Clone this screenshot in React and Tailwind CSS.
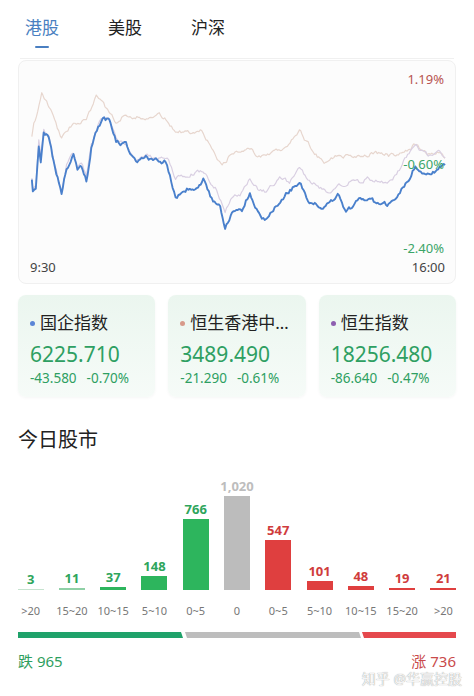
import React from "react";

const FONT = { fontFamily: '"Noto Sans", "Noto Sans CJK SC", sans-serif' };

function rng(seed) {
  let s = seed >>> 0;
  return () => {
    s = (s + 0x6d2b79f5) >>> 0;
    let t = s;
    t = Math.imul(t ^ (t >>> 15), t | 1);
    t ^= t + Math.imul(t ^ (t >>> 7), t | 61);
    return ((t ^ (t >>> 14)) >>> 0) / 4294967296;
  };
}

// key points in page coords, jitter added on top
function makeLine(keys, seed, amp) {
  const r = rng(seed);
  const pts = [];
  let n = 0;
  for (let i = 0; i < keys.length - 1; i++) {
    const [x0, y0] = keys[i];
    const [x1, y1] = keys[i + 1];
    const steps = Math.max(1, Math.round((x1 - x0) / 1.4));
    for (let k = 0; k < steps; k++) {
      const t = k / steps;
      n = n * 0.55 + (r() - 0.5) * amp;
      pts.push(`${(x0 + (x1 - x0) * t).toFixed(1)},${(y0 + (y1 - y0) * t + n).toFixed(1)}`);
    }
  }
  const last = keys[keys.length - 1];
  pts.push(`${last[0]},${last[1]}`);
  return pts.join(" ");
}

const blueKeys = [[30,180],[31,192],[34,190],[37,145],[39,160],[42,132],[47,137],[52,162],[60,195],[65,168],[72,155],[76,170],[80,165],[85,180],[90,148],[97,127],[103,117],[108,122],[115,140],[125,145],[135,162],[145,158],[158,160],[165,162],[175,198],[185,190],[195,188],[203,180],[210,197],[220,208],[225,232],[232,210],[242,212],[250,193],[258,212],[265,220],[275,208],[285,195],[300,182],[310,202],[325,208],[340,195],[347,212],[360,202],[375,202],[390,205],[400,195],[410,178],[417,167],[425,173],[432,178],[440,168],[447,165]];

const purpleKeys = [
  ...blueKeys.filter(([x]) => x <= 160).map(([x, y]) => [x, y - 2]),
  [168,160],[175,178],[188,175],[200,172],[208,178],[215,188],[225,212],[232,196],[240,195],[250,178],[258,190],[265,192],[280,178],[290,182],[300,168],[310,180],[320,188],[330,195],[340,186],[350,182],[360,182],[370,178],[380,182],[390,182],[398,175],[405,162],[412,150],[418,145],[425,152],[430,155],[440,152],[447,158],
];

const beigeKeys = [[30,138],[32,125],[36,110],[40,93],[45,102],[50,112],[60,138],[65,132],[72,122],[85,120],[92,104],[95,93],[100,100],[105,108],[115,122],[125,113],[140,118],[150,116],[160,115],[168,122],[175,130],[190,132],[200,128],[210,145],[217,160],[222,168],[228,158],[235,152],[242,150],[250,148],[258,156],[265,155],[275,150],[285,147],[292,140],[300,130],[305,138],[310,145],[318,155],[325,162],[332,158],[340,155],[350,156],[360,155],[370,154],[380,153],[390,155],[400,155],[410,150],[418,143],[425,152],[435,155],[440,152],[447,158]];

const lines = {
  beige: makeLine(beigeKeys, 7, 3.5),
  purple: makeLine(purpleKeys, 13, 3.5),
  blue: makeLine(blueKeys, 21, 4.5),
};

const indices = [
  { name: "国企指数", dot: "bg-[#5b86d6]", value: "6225.710", chg: "-43.580", pct: "-0.70%" },
  { name: "恒生香港中资企业指数", dot: "bg-[#d79a8a]", value: "3489.490", chg: "-21.290", pct: "-0.61%" },
  { name: "恒生指数", dot: "bg-[#8e5fb0]", value: "18256.480", chg: "-86.640", pct: "-0.47%" },
];

const bars = [
  { v: 3, label: ">20", h: 1, bar: "bg-[#c6e3cf]", text: "text-[#2ea55c]" },
  { v: 11, label: "15~20", h: 2, bar: "bg-[#8fd0a6]", text: "text-[#2ea55c]" },
  { v: 37, label: "10~15", h: 3, bar: "bg-[#2db55d]", text: "text-[#2ea55c]" },
  { v: 148, label: "5~10", h: 14, bar: "bg-[#2db55d]", text: "text-[#2ea55c]" },
  { v: 766, label: "0~5", h: 71, bar: "bg-[#2db55d]", text: "text-[#2ea55c]" },
  { v: "1,020", label: "0", h: 94, bar: "bg-[#bcbcbc]", text: "text-[#bdbdbd]" },
  { v: 547, label: "0~5", h: 50, bar: "bg-[#df3f3f]", text: "text-[#d03c3c]" },
  { v: 101, label: "5~10", h: 9, bar: "bg-[#df3f3f]", text: "text-[#d03c3c]" },
  { v: 48, label: "10~15", h: 4, bar: "bg-[#df3f3f]", text: "text-[#d03c3c]" },
  { v: 19, label: "15~20", h: 2, bar: "bg-[#df3f3f]", text: "text-[#d03c3c]" },
  { v: 21, label: ">20", h: 2, bar: "bg-[#df3f3f]", text: "text-[#d03c3c]" },
];

export default function App() {
  return (
    <div className="w-[474px] h-[696px] bg-white overflow-hidden" style={FONT}>
      {/* tabs */}
      <div className="h-[58px] flex gap-[49px] pl-[25px] pt-[17px]">
        <div className="flex flex-col items-center">
          <span className="text-[17px] leading-[22px] text-[#4a7fc1]">港股</span>
          <span className="mt-[7px] h-[2px] w-[14px] bg-[#4a7fc1] rounded-full" />
        </div>
        <span className="text-[17px] leading-[22px] text-[#222]">美股</span>
        <span className="text-[17px] leading-[22px] text-[#222]">沪深</span>
      </div>
      <div className="mx-[20px] h-px bg-[#f0f0f0]" />

      {/* intraday chart */}
      <div className="relative mx-[18px] mt-[1px] h-[224px] rounded-[8px] bg-[#fcfcfc] border border-[#f0f0f0]">
        <svg className="absolute inset-0 w-full h-full" viewBox="18 60 438 224" fill="none">
          <polyline points={lines.beige} stroke="#e7d6ce" strokeWidth="1.2" strokeLinejoin="round" />
          <polyline points={lines.purple} stroke="#d9cfe2" strokeWidth="1.2" strokeLinejoin="round" />
          <polyline points={lines.blue} stroke="#4a80cc" strokeWidth="1.9" strokeLinejoin="round" />
        </svg>
        <div className="absolute right-[11px] top-[9px] text-[13px] leading-[18px] text-[#b85450]">1.19%</div>
        <div className="absolute right-[11px] top-[94px] text-[13px] leading-[18px] text-[#3ba568]">-0.60%</div>
        <div className="absolute right-[11px] top-[178px] text-[13px] leading-[18px] text-[#3ba568]">-2.40%</div>
        <div className="absolute left-[11px] right-[10px] top-[197px] flex justify-between text-[13px] leading-[18px] text-[#444]">
          <span>9:30</span>
          <span>16:00</span>
        </div>
      </div>

      {/* index cards */}
      <div className="mx-[18px] mt-[11px] grid grid-cols-3 gap-[13px]">
        {indices.map((it) => (
          <div key={it.value} className="h-[102px] min-w-0 rounded-[8px] bg-gradient-to-b from-[#ebf6ef] to-[#f6fbf8] shadow-[0_1px_3px_rgba(0,0,0,0.04)] pl-[12px] pr-[8px] pt-[16px]">
            <div className="flex items-center gap-[5px] min-w-0">
              <span className={`h-[5px] w-[5px] shrink-0 rounded-full ${it.dot}`} />
              <span className="min-w-0 text-[17px] leading-[24px] text-[#222] truncate">{it.name}</span>
            </div>
            <div className="mt-[6px] text-[21px] leading-[26px] text-[#2e9f62]">{it.value}</div>
            <div className="mt-[2px] flex gap-[10px] text-[13.5px] leading-[18px] text-[#2e9f62]">
              <span>{it.chg}</span>
              <span>{it.pct}</span>
            </div>
          </div>
        ))}
      </div>

      {/* today market */}
      <div className="mt-[29px] pl-[18px] text-[20px] leading-[28px] text-[#222]">今日股市</div>

      <div className="px-[10px] h-[136px] grid grid-cols-11 items-end">
        {bars.map((b, i) => (
          <div key={i} className="flex flex-col items-center">
            <span className={`text-[13px] leading-[16px] font-bold ${b.text}`}>{b.v}</span>
            <div className={`mt-[2px] w-[26px] ${b.bar}`} style={{ height: b.h }} />
          </div>
        ))}
      </div>
      <div className="mt-[14px] px-[10px] grid grid-cols-11">
        {bars.map((b, i) => (
          <span key={i} className="text-center text-[11px] leading-[14px] text-[#777]">{b.label}</span>
        ))}
      </div>

      {/* rise / fall split */}
      <div className="mx-[18px] mt-[14px] flex h-[6px]">
        <div className="w-[165px] bg-[#1fa26a] [clip-path:polygon(0_0,calc(100%_-_2px)_0,100%_100%,0_100%)]" />
        <div className="ml-[2px] w-[176px] bg-[#bdbdbd] [clip-path:polygon(0_0,calc(100%_-_2px)_0,100%_100%,2px_100%)]" />
        <div className="ml-[1px] flex-1 bg-[#e5484d] [clip-path:polygon(0_0,100%_0,100%_100%,2px_100%)]" />
      </div>

      <div className="mx-[18px] mt-[13px] flex justify-between text-[15px] leading-[20px]">
        <span className="text-[#2e9e5e]">跌 965</span>
        <span className="text-[#c94a4a]">涨 736</span>
      </div>
      <div className="mt-[-1px] flex justify-end pr-[12px]">
        <span className="text-[14px] leading-[18px] text-[#f4f4f4] [text-shadow:0_0_1px_#8a8a8a]">知乎 @华赢控股</span>
      </div>
    </div>
  );
}
